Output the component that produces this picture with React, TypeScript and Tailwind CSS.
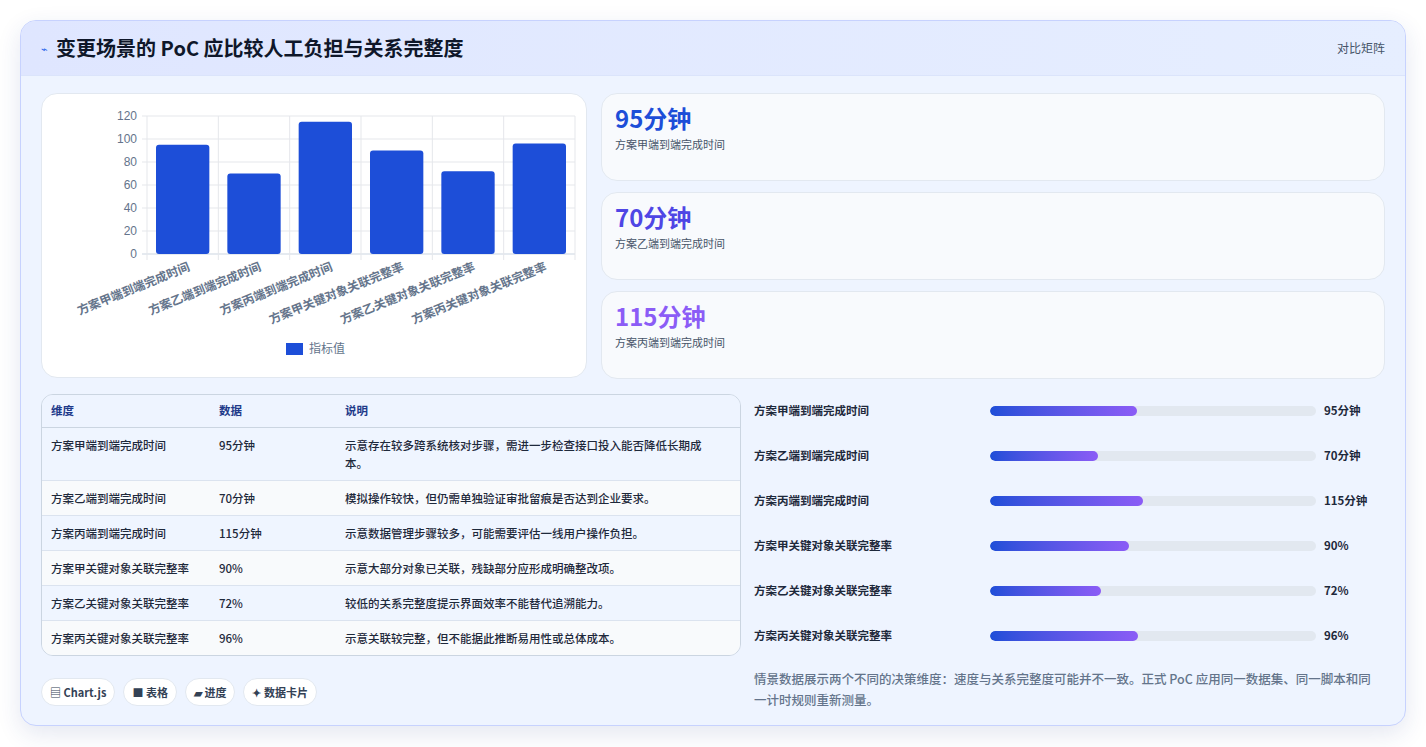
import React from "react";

const font = { fontFamily: '"Noto Sans CJK SC", "Noto Sans", sans-serif' };

const rows = [
  ["方案甲端到端完成时间", "95分钟", "示意存在较多跨系统核对步骤，需进一步检查接口投入能否降低长期成本。", 45],
  ["方案乙端到端完成时间", "70分钟", "模拟操作较快，但仍需单独验证审批留痕是否达到企业要求。", 33],
  ["方案丙端到端完成时间", "115分钟", "示意数据管理步骤较多，可能需要评估一线用户操作负担。", 47],
  ["方案甲关键对象关联完整率", "90%", "示意大部分对象已关联，残缺部分应形成明确整改项。", 42.5],
  ["方案乙关键对象关联完整率", "72%", "较低的关系完整度提示界面效率不能替代追溯能力。", 34],
  ["方案丙关键对象关联完整率", "96%", "示意关联较完整，但不能据此推断易用性或总体成本。", 45.3],
] as const;

const vals = [95, 70, 115, 90, 72, 96];

function Chart() {
  const x0 = 105, x1 = 533, y0 = 160, yTop = 22;
  const cw = (x1 - x0) / 6;
  const sy = (v: number) => y0 - (v / 120) * (y0 - yTop);
  return (
    <svg width="545" height="284" className="block">
      {[0, 20, 40, 60, 80, 100, 120].map((t) => (
        <g key={t}>
          <line x1={x0 - 5} x2={x1} y1={sy(t)} y2={sy(t)} stroke={t === 0 ? "#cbd5e1" : "#e5e7eb"} />
          <text x={x0 - 10} y={sy(t) + 4} textAnchor="end" fontSize="12" fill="#64748b" fontFamily="Liberation Sans, sans-serif">{t}</text>
        </g>
      ))}
      {Array.from({ length: 7 }).map((_, i) => (
        <line key={i} x1={x0 + i * cw} x2={x0 + i * cw} y1={yTop} y2={y0 + 6} stroke="#e5e7eb" />
      ))}
      {vals.map((v, i) => (
        <rect key={i} x={x0 + i * cw + 9} y={sy(v)} width={cw - 18} height={y0 - sy(v)} rx="3" fill="#1d4ed8" />
      ))}
      {rows.map((r, i) => (
        <text key={i} transform={`translate(${x0 + i * cw + cw / 2 + 8},${y0 + 16}) rotate(-22)`} textAnchor="end" fontSize="12" fill="#64748b" fontWeight="600" style={font}>{r[0]}</text>
      ))}
      <rect x="244" y="249" width="17" height="12" fill="#1d4ed8" />
      <text x="267" y="259" fontSize="12" fill="#64748b" style={font}>指标值</text>
    </svg>
  );
}

export default function App() {
  return (
    <div className="w-[1426px] h-[747px] bg-white pt-5 px-5" style={font}>
      <div className="rounded-2xl border border-[#c7d2fe] bg-[#eef4ff] shadow-[0_8px_24px_rgba(30,58,138,0.12)] overflow-hidden h-[706px]">
        <div className="h-[55px] flex items-center justify-between px-5 bg-gradient-to-r from-[#dfe6ff] to-[#e6eeff] border-b border-[#dbe4fb]">
          <div className="flex items-center gap-2">
            <span className="text-[#2563eb] text-[11px]">⌁</span>
            <h1 className="text-[20px] font-bold text-[#0f172a]">变更场景的 PoC 应比较人工负担与关系完整度</h1>
          </div>
          <span className="text-[12px] text-[#475569]">对比矩阵</span>
        </div>
        <div className="px-5 pt-[17px]">
          <div className="flex gap-[14px]">
            <div className="w-[546px] h-[285px] bg-white rounded-2xl border border-[#e2e8f0]"><Chart /></div>
            <div className="flex-1 flex flex-col gap-[11px]">
              {[["95分钟", "方案甲端到端完成时间", "text-[#1d4ed8]"], ["70分钟", "方案乙端到端完成时间", "text-[#4f46e5]"], ["115分钟", "方案丙端到端完成时间", "text-[#8b5cf6]"]].map(([v, l, c]) => (
                <div key={v} className="h-[88px] bg-[#f8fafd] rounded-2xl border border-[#e2e8f0] px-[13px] pt-[6px]">
                  <div className={`text-[24px] font-bold leading-[36px] ${c}`}>{v}</div>
                  <div className="text-[11px] text-[#475569]">{l}</div>
                </div>
              ))}
            </div>
          </div>
          <div className="flex gap-[13px] mt-[15px]">
            <div className="w-[700px]">
              <div className="rounded-xl border border-[#cbd5e1] overflow-hidden text-[11.5px] text-[#1e293b]">
                <div className="grid grid-cols-[168px_126px_1fr] px-[9px] h-[33px] items-center bg-[#eef4ff] text-[#1e3a8a] font-semibold border-b border-[#cbd5e1]">
                  <span>维度</span><span>数据</span><span>说明</span>
                </div>
                {rows.map((r, i) => (
                  <div key={i} className={`grid grid-cols-[168px_126px_1fr] px-[9px] py-[8px] border-b last:border-b-0 border-[#dbe3ef] font-medium leading-[18px] ${i % 2 ? "bg-[#f8fafc]" : "bg-[#eff5ff]"}`}>
                    <span>{r[0]}</span><span>{r[1]}</span><span className="pr-2">{r[2]}</span>
                  </div>
                ))}
              </div>
              <div className="flex gap-[8px] mt-[22px] text-[11px] font-semibold text-[#334155]">
                {["▤ Chart.js", "■ 表格", "▰ 进度", "✦ 数据卡片"].map((t) => (
                  <span key={t} className="h-[28px] px-[8px] flex items-center rounded-full bg-white border border-[#e2e8f0]">{t}</span>
                ))}
              </div>
            </div>
            <div className="flex-1 -mt-[6px]">
              {rows.map((r, i) => (
                <div key={i} className="h-[45px] flex items-center text-[11.5px] font-semibold text-[#1e293b]">
                  <span className="w-[236px]">{r[0]}</span>
                  <div className="w-[326px] h-[10px] rounded-full bg-[#e2e8f0] overflow-hidden">
                    <div className="h-full rounded-full bg-gradient-to-r from-[#1d4ed8] to-[#8b5cf6]" style={{ width: `${r[3]}%` }} />
                  </div>
                  <span className="ml-[8px]">{r[1]}</span>
                </div>
              ))}
              <p className="mt-[10px] text-[12.5px] leading-[21px] text-[#64748b] font-medium pr-[4px]">情景数据展示两个不同的决策维度：速度与关系完整度可能并不一致。正式 PoC 应用同一数据集、同一脚本和同一计时规则重新测量。</p>
            </div>
          </div>
        </div>
      </div>
    </div>
  );
}
